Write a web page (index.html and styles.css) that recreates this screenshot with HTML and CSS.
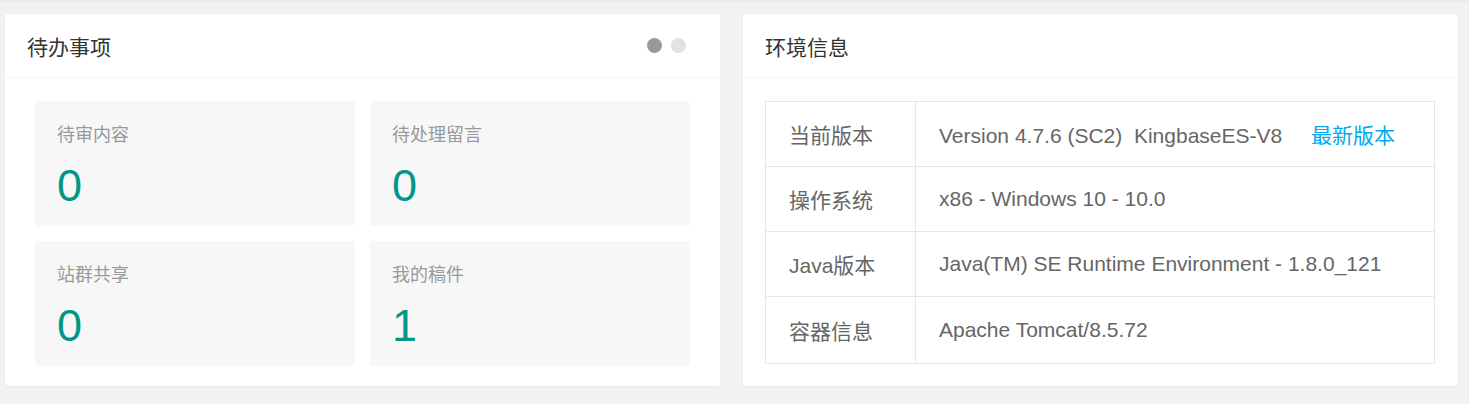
FILE: index.html
```html
<!DOCTYPE html>
<html lang="zh-CN">

<head>
    <meta charset="UTF-8">
    <title>控制台</title>
    <link rel="stylesheet" href="styles.css">
</head>

<body>
    <div class="row">
        <div class="card">
            <div class="card-header">
                待办事项
                <div class="dots">
                    <span class="dot active"></span>
                    <span class="dot"></span>
                </div>
            </div>
            <div class="card-body backlog">
                <div class="backlog-item">
                    <h3>待审内容</h3>
                    <p>0</p>
                </div>
                <div class="backlog-item">
                    <h3>待处理留言</h3>
                    <p>0</p>
                </div>
                <div class="backlog-item">
                    <h3>站群共享</h3>
                    <p>0</p>
                </div>
                <div class="backlog-item">
                    <h3>我的稿件</h3>
                    <p>1</p>
                </div>
            </div>
        </div>

        <div class="card">
            <div class="card-header">环境信息</div>
            <div class="card-body env">
                <table>
                    <tr>
                        <td class="name">当前版本</td>
                        <td>Version 4.7.6 (SC2)&nbsp; KingbaseES-V8 <a class="latest" href="#">最新版本</a></td>
                    </tr>
                    <tr>
                        <td class="name">操作系统</td>
                        <td>x86 - Windows 10 - 10.0</td>
                    </tr>
                    <tr>
                        <td class="name">Java版本</td>
                        <td>Java(TM) SE Runtime Environment - 1.8.0_121</td>
                    </tr>
                    <tr>
                        <td class="name">容器信息</td>
                        <td>Apache Tomcat/8.5.72</td>
                    </tr>
                </table>
            </div>
        </div>
    </div>
</body>

</html>
```

FILE: styles.css
```css
body {
    margin: 0;
    background-color: #f2f2f2;
    font-family: "Liberation Sans", "Noto Sans CJK SC", sans-serif;
    color: #333;
    box-shadow: inset 0 2px 2px rgba(0, 0, 0, 0.03);
    min-height: 404px;
}

.row {
    display: flex;
    gap: 23px;
    padding: 14px 11px 0 5px;
}

.card {
    flex: 1;
    background-color: white;
    border-radius: 3px;
    box-shadow: 0 1px 2px 0 rgba(0, 0, 0, 0.05);
    height: 372px;
}

.card-header {
    display: flex;
    align-items: center;
    justify-content: space-between;
    height: 63px;
    padding: 0 34px 0 22px;
    border-bottom: 1px solid #f6f6f6;
    font-size: 21px;
    color: #333;
}

.dots {
    display: flex;
    gap: 9px;
}

.dot {
    width: 15px;
    height: 15px;
    border-radius: 50%;
    background-color: #e2e2e2;
}

.dot.active {
    background-color: #999;
}

.backlog {
    display: grid;
    grid-template-columns: 1fr 1fr;
    gap: 15px;
    padding: 23px 30px 20px 30px;
}

.backlog-item {
    height: 125px;
    box-sizing: border-box;
    padding: 22px 22px 0 22px;
    background-color: #f7f7f7;
    border-radius: 3px;
}

.backlog-item h3 {
    margin: 0;
    font-size: 18px;
    font-weight: normal;
    line-height: 24px;
    color: #999;
}

.backlog-item p {
    margin: 14px 0 0 0;
    font-size: 45px;
    line-height: 50px;
    color: #009688;
}

.env {
    padding: 23px 23px 0 22px;
}

table {
    width: 100%;
    border-collapse: collapse;
}

td {
    height: 64px;
    padding: 0 23px;
    border: 1px solid #e6e6e6;
    font-size: 21px;
    color: #666;
}

td.name {
    width: 103px;
}

tr:last-child td {
    height: 66px;
}

.latest {
    margin-left: 23px;
    color: #01aaed;
    text-decoration: none;
}
```
